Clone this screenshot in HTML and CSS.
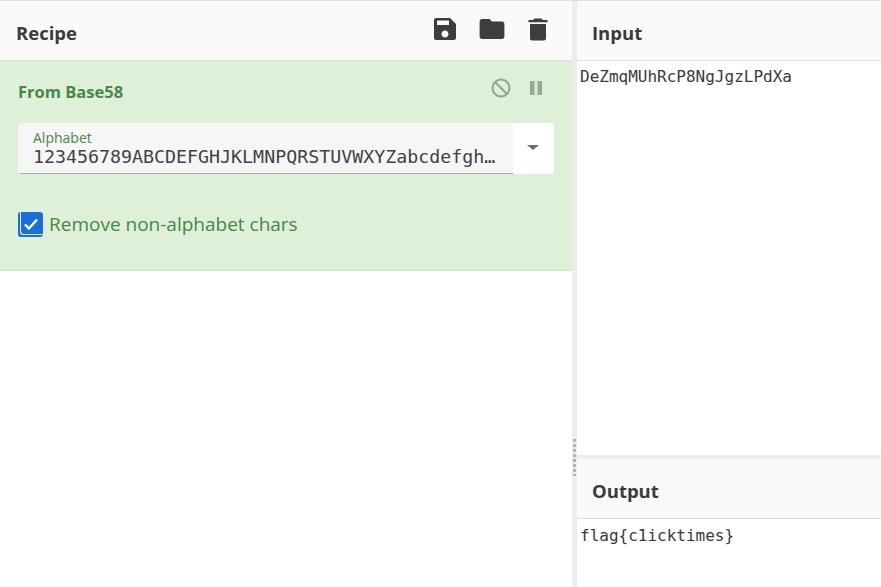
FILE: index.html
```html
<!DOCTYPE html>
<html>
<head>
    <link rel="stylesheet" href="styles.css">
</head>
<body>
    <div class="page">
        <section class="recipe">
            <div class="title-bar">
                <h2>Recipe</h2>
                <div class="tools">
                    <svg width="24" height="24" viewBox="0 0 24 24"><path d="M17 1H3C1.900 1 1 1.900 1 3v18c0 1.100.9 2 2 2h18c1.100 0 2-.9 2-2V7l-6-6zm-5 19.500c-1.900 0-3.500-1.600-3.500-3.500s1.600-3.500 3.500-3.500 3.500 1.600 3.500 3.500-1.600 3.500-3.500 3.500zM16 8H4V3.500h12V8z"/></svg>
                    <svg width="26" height="24" viewBox="0 0 26 24"><path d="M10.500 2H3C1.600 2 .6 3.100.6 4.500v15C.6 20.900 1.600 22 3 22h20c1.400 0 2.400-1.100 2.400-2.500V7c0-1.400-1-2.500-2.400-2.500H13L10.500 2z"/></svg>
                    <svg width="22" height="24" viewBox="0 0 22 24"><path d="M3 7h16v14.500c0 1.100-.9 2-2 2H5c-1.100 0-2-.9-2-2V7zM14.500 1.500l1.300 1.500H20.500v2.200h-19V3h4.700l1.300-1.500h7z"/></svg>
                </div>
            </div>
            <div class="operation">
                <div class="op-head">
                    <h3>From Base58</h3>
                    <div class="op-tools">
                        <svg width="20" height="20" viewBox="0 0 20 20"><circle cx="10" cy="10" r="8.500"/><path d="M4 4l12 12"/></svg>
                        <svg class="pause" width="14" height="16" viewBox="0 0 14 16"><rect x="1" y="1" width="4.500" height="14"/><rect x="8.500" y="1" width="4.500" height="14"/></svg>
                    </div>
                </div>
                <div class="field">
                    <div class="field-text">
                        <label>Alphabet</label>
                        <div class="field-value">123456789ABCDEFGHJKLMNPQRSTUVWXYZabcdefghijkmnopqrstuvwxyz</div>
                    </div>
                    <div class="field-drop"><span class="caret"></span></div>
                </div>
                <div class="check-row">
                    <span class="check">
                        <svg width="18" height="18" viewBox="0 0 18 18"><path d="M3 9.500l4 4 8-9"/></svg>
                    </span>
                    <span>Remove non-alphabet chars</span>
                </div>
            </div>
        </section>
        <div class="gutter"><span class="grip"></span></div>
        <section class="io">
            <div class="io-input">
                <div class="title-bar"><h2>Input</h2></div>
                <div class="io-text">DeZmqMUhRcP8NgJgzLPdXa</div>
            </div>
            <div class="io-output">
                <div class="title-bar"><h2>Output</h2></div>
                <div class="io-text">flag{c1icktimes}</div>
            </div>
        </section>
    </div>
</body>
</html>
```

FILE: styles.css
```css
* {
    box-sizing: border-box;
}

html, body {
    margin: 0;
    height: 100%;
    overflow: hidden;
}

body {
    font-family: "Open Sans", "Noto Sans", sans-serif;
    background-color: #fff;
    color: #3a3a3a;
}

.page {
    display: grid;
    grid-template-columns: 572px 5px 1fr;
    height: 587px;
    border-top: 1px solid #e0e0e0;
}

.title-bar {
    display: flex;
    align-items: center;
    justify-content: space-between;
    height: 60px;
    padding: 4px 23px 0 16px;
    background-color: #fafafa;
    border-bottom: 1px solid #dddddd;
}

h2 {
    margin: 0;
    font-size: 18.500px;
    font-weight: 700;
    color: #3a3a3a;
}

.tools {
    display: flex;
    align-items: center;
    gap: 22px;
    margin-top: -8px;
}

.tools svg {
    fill: #3d3d3d;
    display: block;
}

.operation {
    height: 210px;
    padding: 16px 18px 0 18px;
    background-color: #dff0d8;
    border-bottom: 1px solid #d5e6ce;
    color: #468847;
}

.op-head {
    display: flex;
    justify-content: space-between;
    align-items: center;
    height: 28px;
}

h3 {
    margin: 0;
    font-size: 16.500px;
    font-weight: 700;
    color: #468847;
}

.op-tools {
    display: flex;
    align-items: center;
    gap: 18px;
    margin-top: -7px;
    padding-right: 11px;
}

.op-tools svg {
    display: block;
    fill: none;
    stroke: #94a394;
    stroke-width: 2;
}

.op-tools .pause {
    fill: #9aa89a;
    stroke: none;
}

.field {
    display: flex;
    height: 51px;
    margin-top: 18px;
    border-radius: 4px;
    overflow: hidden;
    background-color: #fff;
}

.field-text {
    flex: 0 0 495px;
    padding: 7px 15px 0 15px;
    background-color: #f6f6f6;
    border-bottom: 1px solid #a9a9a9;
    min-width: 0;
}

.field-text label {
    display: block;
    font-size: 14px;
    line-height: 16px;
    color: #468847;
}

.field-value {
    font-family: "DejaVu Sans Mono", monospace;
    font-size: 18.300px;
    line-height: 21px;
    color: #424242;
    white-space: nowrap;
    overflow: hidden;
    text-overflow: ellipsis;
}

.field-drop {
    flex: 1;
    display: flex;
    align-items: center;
    justify-content: center;
    padding: 0 2px 3px 0;
}

.caret {
    width: 0;
    height: 0;
    border-left: 6px solid transparent;
    border-right: 6px solid transparent;
    border-top: 5px solid #6b6b6b;
}

.check-row {
    display: flex;
    align-items: center;
    gap: 6px;
    margin-top: 37px;
    font-size: 19px;
    line-height: 26px;
}

.check {
    display: flex;
    align-items: center;
    justify-content: center;
    width: 25px;
    height: 25px;
    background-color: #1a6fd6;
    border-radius: 3px;
    box-shadow: inset 2px -2px 0 #1a6fd6, inset 3px -3px 0 #dfeaf5;
}

.check svg {
    fill: none;
    stroke: #fff;
    stroke-width: 2.400;
}

.gutter {
    position: relative;
    background-color: #ededed;
}

.grip {
    position: absolute;
    left: 0;
    top: 437px;
    width: 5px;
    height: 38px;
    background-image: radial-gradient(circle, #b4b4b4 1.500px, transparent 1.600px);
    background-size: 5px 5px;
}

.io {
    display: flex;
    flex-direction: column;
}

.io .title-bar {
    padding-left: 15px;
}

.io-input {
    height: 458px;
    border-bottom: 4px solid #ededed;
}

.io-output {
    flex: 1;
}

.io-text {
    padding: 5px 3px 0 3px;
    font-family: "DejaVu Sans Mono", monospace;
    font-size: 16px;
    line-height: 22px;
    color: #3a3a3a;
    white-space: pre;
}

.io-output .io-text {
    padding-top: 6px;
}
```
